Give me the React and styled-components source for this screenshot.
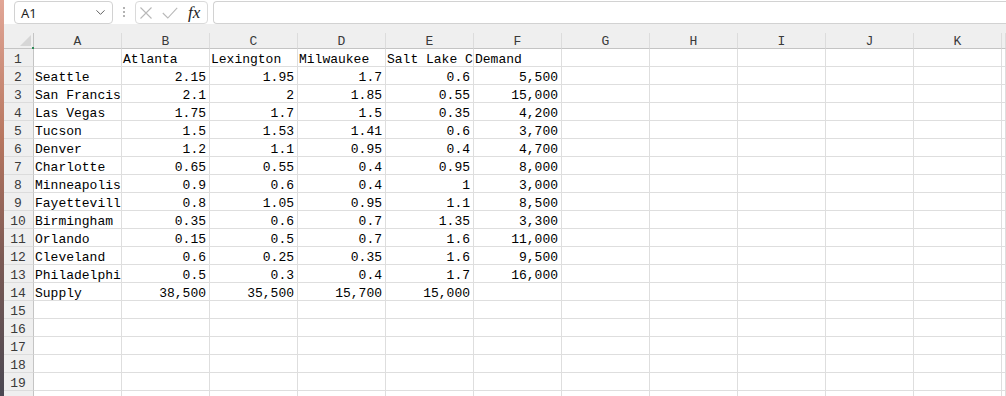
import React from 'react';
import styled, { createGlobalStyle } from 'styled-components';
import { ChevronDown } from 'lucide-react';

const GlobalStyle = createGlobalStyle`
  html, body {
    margin: 0;
    padding: 0;
    width: 1006px;
    height: 396px;
    overflow: hidden;
    background: #fff;
  }
`;

const Root = styled.div`
  display: flex;
  width: 1006px;
  height: 396px;
  overflow: hidden;
`;

const Wallpaper = styled.div`
  width: 4px;
  flex: none;
  background: linear-gradient(180deg, #e2a797 0%, #b7765f 35%, #7c5a55 65%, #4a4852 100%);
`;

const Main = styled.div`
  flex: 1;
  display: flex;
  flex-direction: column;
  min-width: 0;
`;

const Toolbar = styled.div`
  height: 24px;
  flex: none;
  display: flex;
  align-items: flex-start;
  padding: 1px 0 0 10px;
  box-sizing: border-box;
  background: #fff;
  font-family: "Noto Sans", "Open Sans", sans-serif;
`;

const NameBox = styled.div`
  width: 99px;
  height: 23px;
  box-sizing: border-box;
  border: 1px solid #d2d2d2;
  border-radius: 4px;
  display: flex;
  align-items: center;
  justify-content: space-between;
  padding: 0 4px 0 6px;
  font-size: 13px;
  color: #1f1f1f;
`;

const Dots = styled.div`
  width: 22px;
  height: 22px;
  display: flex;
  align-items: center;
  justify-content: center;
`;

const FuncBox = styled.div`
  width: 73px;
  height: 23px;
  box-sizing: border-box;
  border: 1px solid #dadada;
  border-radius: 4px;
  display: flex;
  align-items: center;
  gap: 10px;
  padding: 0 4px 0 4px;
`;

const Fx = styled.span`
  font-family: "Liberation Serif", "DejaVu Serif", serif;
  font-style: italic;
  font-size: 17px;
  color: #222;
  line-height: 1;
`;

const FormulaInput = styled.div`
  flex: 1;
  height: 23px;
  margin-left: 5px;
  box-sizing: border-box;
  border: 1px solid #d2d2d2;
  border-right: none;
  border-radius: 4px 0 0 4px;
`;

const Band = styled.div`
  height: 9px;
  flex: none;
  background: #efefef;
`;

const Grid = styled.div`
  flex: 1;
  display: grid;
  grid-template-columns: 30px repeat(11, 88px) 1fr;
  grid-template-rows: 16px;
  grid-auto-rows: 18px;
  font-family: "Liberation Mono", "DejaVu Sans Mono", monospace;
  font-size: 13px;
`;

const Corner = styled.div`
  background: #efefef;
  border-right: 1px solid #c4c4c4;
  border-bottom: 1px solid #c4c4c4;
  box-sizing: border-box;
  display: flex;
  align-items: flex-end;
  justify-content: flex-end;
  padding: 0 2px 2px 0;
  position: relative;
`;

const GreenDot = styled.span`
  position: absolute;
  right: -1px;
  bottom: -1px;
  width: 2px;
  height: 2px;
  background: #2e8b57;
`;

const ColHead = styled.div`
  background: #efefef;
  border-right: 1px solid #dcdcdc;
  border-bottom: 1px solid #c4c4c4;
  box-sizing: border-box;
  color: #3a3a3a;
  text-align: center;
  line-height: 15px;
  padding-top: 1px;
  overflow: hidden;
`;

const RowHead = styled.div`
  background: #efefef;
  border-right: 1px solid #c4c4c4;
  border-bottom: 1px solid #dcdcdc;
  box-sizing: border-box;
  color: #3a3a3a;
  text-align: center;
  line-height: 18px;
  padding: 2px 1px 0 0;
  overflow: hidden;
`;

const Cell = styled.div`
  border-right: 1px solid #dedede;
  border-bottom: 1px solid #dedede;
  box-sizing: border-box;
  color: #000;
  white-space: nowrap;
  overflow: hidden;
  line-height: 18px;
  text-align: ${p => (p.$num ? 'right' : 'left')};
  padding: ${p => (p.$num ? '2px 3px 0 0' : '2px 0 0 1px')};
`;

const columns = ['A', 'B', 'C', 'D', 'E', 'F', 'G', 'H', 'I', 'J', 'K', ''];

const data = [
  ['', 'Atlanta', 'Lexington', 'Milwaukee', 'Salt Lake City', 'Demand'],
  ['Seattle', '2.15', '1.95', '1.7', '0.6', '5,500'],
  ['San Francisco', '2.1', '2', '1.85', '0.55', '15,000'],
  ['Las Vegas', '1.75', '1.7', '1.5', '0.35', '4,200'],
  ['Tucson', '1.5', '1.53', '1.41', '0.6', '3,700'],
  ['Denver', '1.2', '1.1', '0.95', '0.4', '4,700'],
  ['Charlotte', '0.65', '0.55', '0.4', '0.95', '8,000'],
  ['Minneapolis', '0.9', '0.6', '0.4', '1', '3,000'],
  ['Fayetteville', '0.8', '1.05', '0.95', '1.1', '8,500'],
  ['Birmingham', '0.35', '0.6', '0.7', '1.35', '3,300'],
  ['Orlando', '0.15', '0.5', '0.7', '1.6', '11,000'],
  ['Cleveland', '0.6', '0.25', '0.35', '1.6', '9,500'],
  ['Philadelphia', '0.5', '0.3', '0.4', '1.7', '16,000'],
  ['Supply', '38,500', '35,500', '15,700', '15,000', ''],
];

const TOTAL_ROWS = 20;

const isNum = v => /^[\d.,]+$/.test(v);

const App = () => {
  const rows = [];
  for (let r = 0; r < TOTAL_ROWS; r++) {
    const values = data[r] || [];
    rows.push(<RowHead key={`h${r}`}>{r + 1}</RowHead>);
    columns.forEach((c, ci) => {
      const v = values[ci] || '';
      rows.push(
        <Cell key={`${r}-${ci}`} $num={isNum(v) && ci > 0}>
          {v}
        </Cell>
      );
    });
  }

  return (
    <Root>
      <GlobalStyle />
      <Wallpaper />
      <Main>
        <Toolbar>
          <NameBox>
            <span>A1</span>
            <ChevronDown size={15} strokeWidth={1.5} color="#555" />
          </NameBox>
          <Dots>
            <svg width="4" height="12" viewBox="0 0 4 12">
              <circle cx="2" cy="2" r="1" fill="#9a9a9a" />
              <circle cx="2" cy="6" r="1" fill="#9a9a9a" />
              <circle cx="2" cy="10" r="1" fill="#9a9a9a" />
            </svg>
          </Dots>
          <FuncBox>
            <svg width="12" height="12" viewBox="0 0 12 12">
              <path d="M0.5 0.5 L11.5 11.5 M11.5 0.5 L0.5 11.5" stroke="#b8b8b8" strokeWidth="1.1" fill="none" />
            </svg>
            <svg width="16" height="12" viewBox="0 0 16 12">
              <path d="M0.8 6 L5.8 11 L15.2 0.8" stroke="#b8b8b8" strokeWidth="1.1" fill="none" />
            </svg>
            <Fx>fx</Fx>
          </FuncBox>
          <FormulaInput />
        </Toolbar>
        <Band />
        <Grid>
          <Corner>
            <svg width="11" height="11" viewBox="0 0 11 11">
              <polygon points="11,0 11,11 0,11" fill="#d6d6d6" />
            </svg>
            <GreenDot />
          </Corner>
          {columns.map((c, i) => (
            <ColHead key={i}>{c}</ColHead>
          ))}
          {rows}
        </Grid>
      </Main>
    </Root>
  );
};

export default App;
